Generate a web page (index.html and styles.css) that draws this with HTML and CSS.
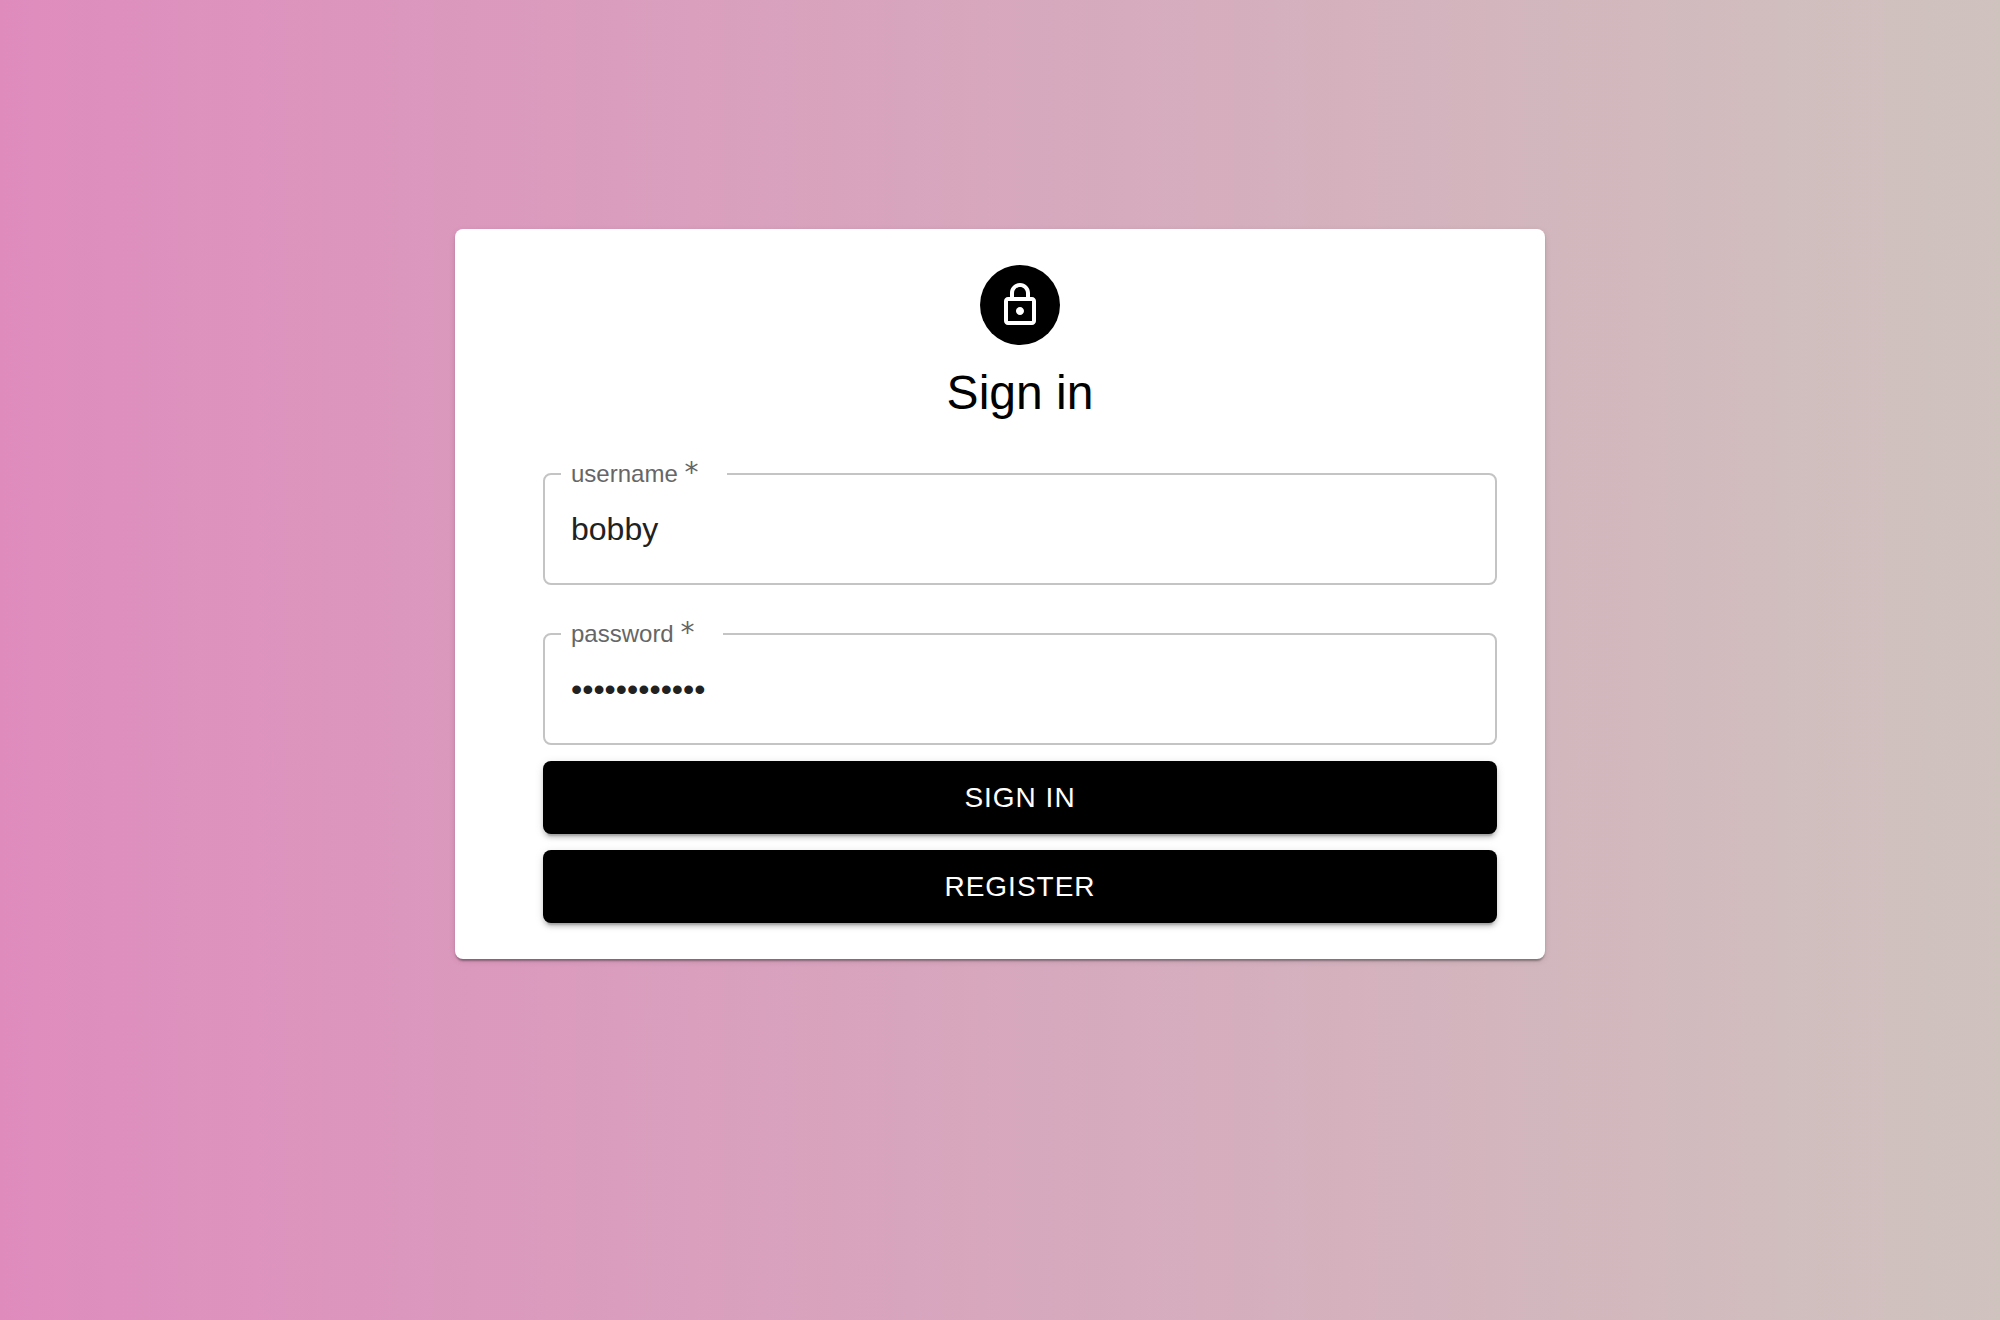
FILE: index.html
```html
<!DOCTYPE html>
<html lang="en">
<head>
<meta charset="utf-8">
<meta name="viewport" content="width=device-width, initial-scale=1">
<title>Sign in</title>
<link rel="stylesheet" href="styles.css">
</head>
<body>
<main class="page">
  <form class="card">
    <div class="avatar">
      <svg class="avatar-icon" viewBox="0 0 24 24" aria-hidden="true"><path d="M18 8h-1V6c0-2.760-2.240-5-5-5S7 3.240 7 6v2H6c-1.100 0-2 .9-2 2v10c0 1.100.9 2 2 2h12c1.100 0 2-.9 2-2V10c0-1.100-.9-2-2-2zM9 6c0-1.660 1.340-3 3-3s3 1.340 3 3v2H9V6zm9 14H6V10h12v10zm-6-3c1.100 0 2-.9 2-2s-.9-2-2-2-2 .9-2 2 .9 2 2 2z"/></svg>
    </div>
    <h1 class="title">Sign in</h1>
    <fieldset class="field">
      <legend class="legend"><label for="username">username <span class="required">*</span></label></legend>
      <input class="input" id="username" type="text" value="bobby" required>
    </fieldset>
    <fieldset class="field">
      <legend class="legend"><label for="password">password <span class="required">*</span></label></legend>
      <input class="input" id="password" type="password" value="bobbybobby12" required>
    </fieldset>
    <div class="actions">
      <button class="button" type="submit">SIGN IN</button>
      <button class="button" type="button">REGISTER</button>
    </div>
  </form>
</main>
</body>
</html>
```
FILE: styles.css
```css
* {
  box-sizing: border-box;
}

body {
  margin: 0;
  font-family: "Liberation Sans", Arial, sans-serif;
}

.page {
  min-height: 100vh;
  padding: 229px 24px 48px;
  background: linear-gradient(to right, #df8cbd, #cfc3be);
}

.card {
  display: flex;
  flex-direction: column;
  max-width: 1090px;
  margin: 0 auto;
  padding: 36px 48px 36px 88px;
  border-radius: 8px;
  background: #fff;
  box-shadow: 0 4px 2px -2px rgba(0, 0, 0, 0.2), 0 2px 2px rgba(0, 0, 0, 0.14), 0 2px 6px rgba(0, 0, 0, 0.12);
}

.avatar {
  display: grid;
  place-items: center;
  align-self: center;
  width: 80px;
  height: 80px;
  border-radius: 50%;
  background: #000;
}

.avatar-icon {
  width: 48px;
  height: 48px;
  fill: #fff;
}

.title {
  margin: 16px 0 0;
  font-size: 48px;
  font-weight: 400;
  line-height: 64px;
  text-align: center;
  color: #000;
}

.field {
  min-width: 0;
  margin: 37px 0 0;
  padding: 0 16px;
  border: 2px solid #c4c4c4;
  border-radius: 8px;
}

.legend {
  padding: 0 29px 0 10px;
  font-size: 24px;
  line-height: 24px;
  color: #666;
}

.required {
  font-family: "DejaVu Sans", sans-serif;
  font-size: 28px;
  line-height: 16px;
}

.input {
  display: block;
  width: 100%;
  height: 97px;
  padding: 0 10px 11px;
  border: 0;
  outline: 0;
  background: transparent;
  font-family: inherit;
  font-size: 32px;
  color: #212121;
}

.actions {
  display: grid;
  gap: 16px;
  margin-top: 16px;
}

.button {
  height: 73px;
  padding: 0 32px;
  border: 0;
  border-radius: 8px;
  background: #000;
  box-shadow: 0 6px 2px -4px rgba(0, 0, 0, 0.2), 0 4px 4px rgba(0, 0, 0, 0.14), 0 2px 10px rgba(0, 0, 0, 0.12);
  font-family: inherit;
  font-size: 28px;
  letter-spacing: 1px;
  color: #fff;
  cursor: pointer;
}
```
